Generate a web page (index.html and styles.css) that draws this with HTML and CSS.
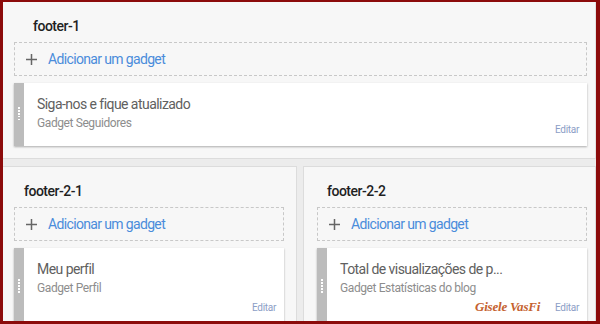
FILE: index.html
```html
<!DOCTYPE html>
<html lang="pt-BR">

<head>
  <meta charset="UTF-8">
  <meta name="viewport" content="width=device-width, initial-scale=1.0">
  <title>Layout - footer</title>
  <link rel="stylesheet" href="styles.css">
</head>

<body>

  <div class="frame">

    <!-- footer-1 -->
    <section class="area area--main">
      <h2 class="area-title">footer-1</h2>
      <a class="add-gadget" href="#">
        <svg width="11" height="11" viewBox="0 0 11 11"><path d="M5.5 0v11M0 5.5h11" stroke="#666" stroke-width="1.5" fill="none"/></svg>
        <span>Adicionar um gadget</span>
      </a>
      <div class="widget">
        <div class="widget-handle"></div>
        <div class="widget-body">
          <div class="widget-text">
            <div class="widget-name">Siga-nos e fique atualizado</div>
            <div class="widget-type">Gadget Seguidores</div>
          </div>
          <a class="widget-edit" href="#">Editar</a>
        </div>
      </div>
    </section>

    <!-- footer-2 -->
    <div class="columns">
      <section class="area area--left">
        <h2 class="area-title">footer-2-1</h2>
        <a class="add-gadget" href="#">
          <svg width="11" height="11" viewBox="0 0 11 11"><path d="M5.5 0v11M0 5.5h11" stroke="#666" stroke-width="1.5" fill="none"/></svg>
          <span>Adicionar um gadget</span>
        </a>
        <div class="widget widget--tall">
          <div class="widget-handle"></div>
          <div class="widget-body">
            <div class="widget-text">
              <div class="widget-name">Meu perfil</div>
              <div class="widget-type">Gadget Perfil</div>
            </div>
            <a class="widget-edit" href="#">Editar</a>
          </div>
        </div>
      </section>

      <section class="area area--right">
        <h2 class="area-title">footer-2-2</h2>
        <a class="add-gadget" href="#">
          <svg width="11" height="11" viewBox="0 0 11 11"><path d="M5.5 0v11M0 5.5h11" stroke="#666" stroke-width="1.5" fill="none"/></svg>
          <span>Adicionar um gadget</span>
        </a>
        <div class="widget widget--tall">
          <div class="widget-handle"></div>
          <div class="widget-body">
            <div class="widget-text">
              <div class="widget-name">Total de visualizações de p...</div>
              <div class="widget-type">Gadget Estatísticas do blog</div>
            </div>
            <a class="widget-edit" href="#">Editar</a>
          </div>
        </div>
      </section>
    </div>

    <!-- watermark -->
    <div class="signature">Gisele VasFi</div>

  </div>

</body>

</html>
```

FILE: styles.css
```css
* {
  box-sizing: border-box;
}

body {
  margin: 0;
  font-family: 'Roboto', 'Liberation Sans', sans-serif;
  background-color: #fff;
}

.frame {
  position: relative;
  width: 600px;
  height: 324px;
  border: 3px solid #8c0b0b;
  border-top-width: 2px;
  border-right-width: 4px;
  background-color: #ececec;
  overflow: hidden;
}

/* Areas */
.area {
  background-color: #f7f7f7;
}

.area--main {
  border-right: 1px solid #e2e2e2;
  border-bottom: 1px solid #dcdcdc;
  padding: 14px 8px 12px 11px;
}

.area-title {
  margin: 0 0 6px;
  padding-left: 10px;
  font-size: 14px;
  font-weight: 500;
  line-height: 20px;
  letter-spacing: -0.5px;
  color: #1f1f1f;
}

.area--main .area-title {
  padding-left: 19px;
}

.columns {
  display: grid;
  grid-template-columns: 294px 293px;
  gap: 6px;
  margin-top: 7px;
}

.columns .area {
  height: 200px;
  border: 1px solid #dcdcdc;
  border-bottom: none;
  padding-top: 14px;
}

.area--left {
  border-left: none !important;
  padding: 0 12px 0 11px;
}

.area--right {
  padding: 0 8px 0 13px;
}

/* Add gadget */
.add-gadget {
  display: flex;
  align-items: center;
  gap: 11px;
  height: 34px;
  padding-left: 11px;
  border: 1px dashed #c8c8c8;
  color: #4a8cdb;
  font-size: 14px;
  letter-spacing: -0.65px;
  text-decoration: none;
}

.add-gadget svg {
  flex-shrink: 0;
}

/* Widget card */
.widget {
  display: flex;
  height: 63px;
  margin-top: 7px;
  background-color: #fff;
  box-shadow: 0 1px 2px rgba(0, 0, 0, 0.3);
}

.widget--tall {
  height: 76px;
}

.widget-handle {
  width: 10px;
  background-color: #bcbcbc;
  display: flex;
  align-items: center;
  justify-content: center;
}

.widget-handle::before {
  content: '';
  width: 2px;
  height: 15px;
  background: repeating-linear-gradient(#fff 0 1.5px, transparent 1.5px 3px);
}

.widget-body {
  flex: 1;
  display: flex;
  justify-content: space-between;
  padding: 11px 8px 10px 13px;
}

.widget-name {
  font-size: 14px;
  line-height: 20px;
  letter-spacing: -0.55px;
  color: #606060;
}

.widget-type {
  margin-top: 1px;
  font-size: 12px;
  line-height: 16px;
  letter-spacing: -0.4px;
  color: #8d8d8d;
}

.widget-edit {
  align-self: flex-end;
  font-size: 10px;
  line-height: 12px;
  letter-spacing: -0.3px;
  color: #8c9ec6;
  text-decoration: none;
}

/* Watermark */
.signature {
  position: absolute;
  left: 472px;
  top: 297px;
  font-family: 'Liberation Serif', serif;
  font-style: italic;
  font-weight: bold;
  font-size: 13px;
  line-height: 16px;
  letter-spacing: -0.2px;
  color: #c5622f;
}
```
